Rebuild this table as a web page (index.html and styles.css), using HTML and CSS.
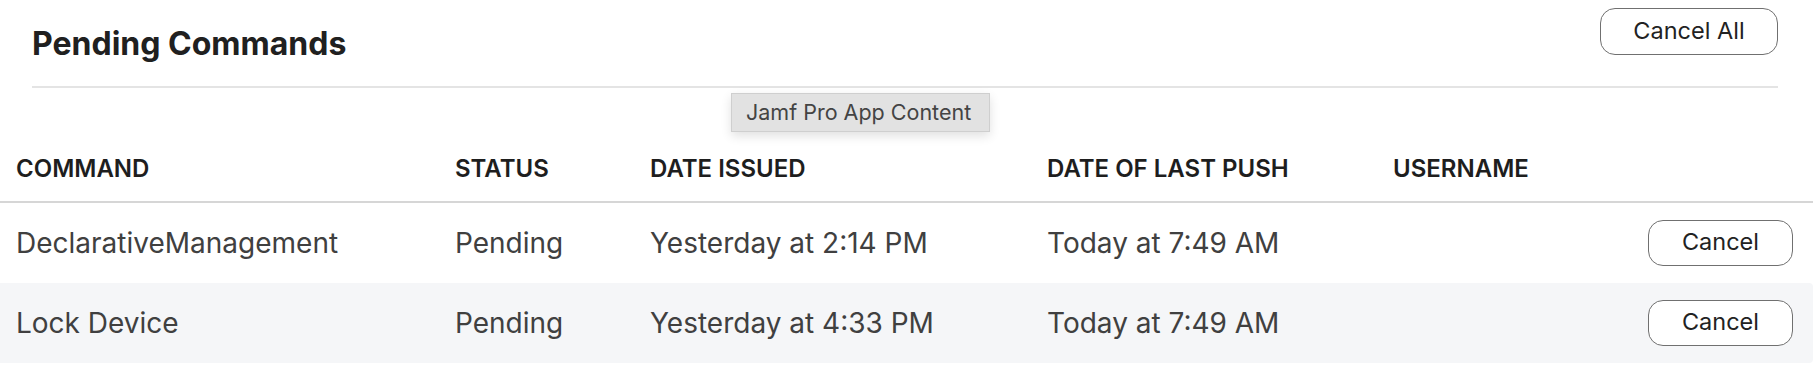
FILE: index.html
```html
<!DOCTYPE html>
<html lang="en">
<head>
<meta charset="utf-8">
<title>Pending Commands</title>
<link rel="stylesheet" href="styles.css">
</head>
<body>
<div class="page">
  <div class="panel-head">
    <h2 class="title">Pending Commands</h2>
    <button class="btn btn-all">Cancel All</button>
  </div>
  <div class="table">
    <div class="row head">
      <div class="cell">COMMAND</div>
      <div class="cell">STATUS</div>
      <div class="cell">DATE ISSUED</div>
      <div class="cell">DATE OF LAST PUSH</div>
      <div class="cell">USERNAME</div>
      <div class="cell"></div>
    </div>
    <div class="row">
      <div class="cell">DeclarativeManagement</div>
      <div class="cell">Pending</div>
      <div class="cell">Yesterday at 2:14 PM</div>
      <div class="cell">Today at 7:49 AM</div>
      <div class="cell"></div>
      <div class="cell action"><button class="btn btn-row">Cancel</button></div>
    </div>
    <div class="row alt">
      <div class="cell">Lock Device</div>
      <div class="cell">Pending</div>
      <div class="cell">Yesterday at 4:33 PM</div>
      <div class="cell">Today at 7:49 AM</div>
      <div class="cell"></div>
      <div class="cell action"><button class="btn btn-row">Cancel</button></div>
    </div>
  </div>
  <div class="tooltip">Jamf Pro App Content</div>
</div>
</body>
</html>
```

FILE: styles.css
```css
* { box-sizing: border-box; }
html, body {
  margin: 0;
  padding: 0;
  background: #ffffff;
}
body {
  font-family: Inter, "Noto Sans", "Liberation Sans", sans-serif;
  color: #222;
}
.page {
  position: relative;
  width: 1816px;
  height: 376px;
}
.panel-head {
  display: flex;
  justify-content: space-between;
  align-items: flex-start;
  margin: 0 38px 0 32px;
  height: 88px;
  border-bottom: 2px solid #e4e4e4;
}
.title {
  margin: 24px 0 0 0;
  font-size: 32px;
  font-weight: 700;
  line-height: 40px;
  color: #202020;
}
.btn {
  font-family: Inter, "Noto Sans", "Liberation Sans", sans-serif;
  background: #fff;
  border: 1.5px solid #707070;
  color: #222;
  cursor: pointer;
  padding: 0 0 3px 0;
}
.btn-all {
  margin-top: 8px;
  width: 178px;
  height: 47px;
  border-radius: 15px;
  font-size: 23.5px;
}
.table {
  margin-top: 43px;
  width: 1813px;
}
.row {
  display: grid;
  grid-template-columns: 439px 195px 397px 346px 1fr auto;
  align-items: center;
  padding: 0 20px 0 16px;
  height: 80px;
  font-size: 28px;
  color: #404040;
}
.row.head {
  height: 72px;
  border-bottom: 2px solid #d6d6d6;
  font-size: 24px;
  font-weight: 600;
  color: #1e1e1e;
  padding-top: 4px;
}
.row.alt {
  background: #f5f6f8;
  border-radius: 0 4px 4px 0;
}
.cell {
  white-space: nowrap;
}
.action {
  display: flex;
  justify-content: flex-end;
}
.btn-row {
  width: 145px;
  height: 46px;
  border-radius: 15px;
  font-size: 23.5px;
}
.tooltip {
  position: absolute;
  left: 731px;
  top: 93px;
  width: 259px;
  height: 39px;
  background: #e2e2e2;
  border: 1px solid #cfcfcf;
  box-shadow: 0 4px 10px rgba(0, 0, 0, 0.12);
  font-size: 21.5px;
  color: #444;
  display: flex;
  align-items: center;
  padding: 0 0 1px 14px;
}
```
